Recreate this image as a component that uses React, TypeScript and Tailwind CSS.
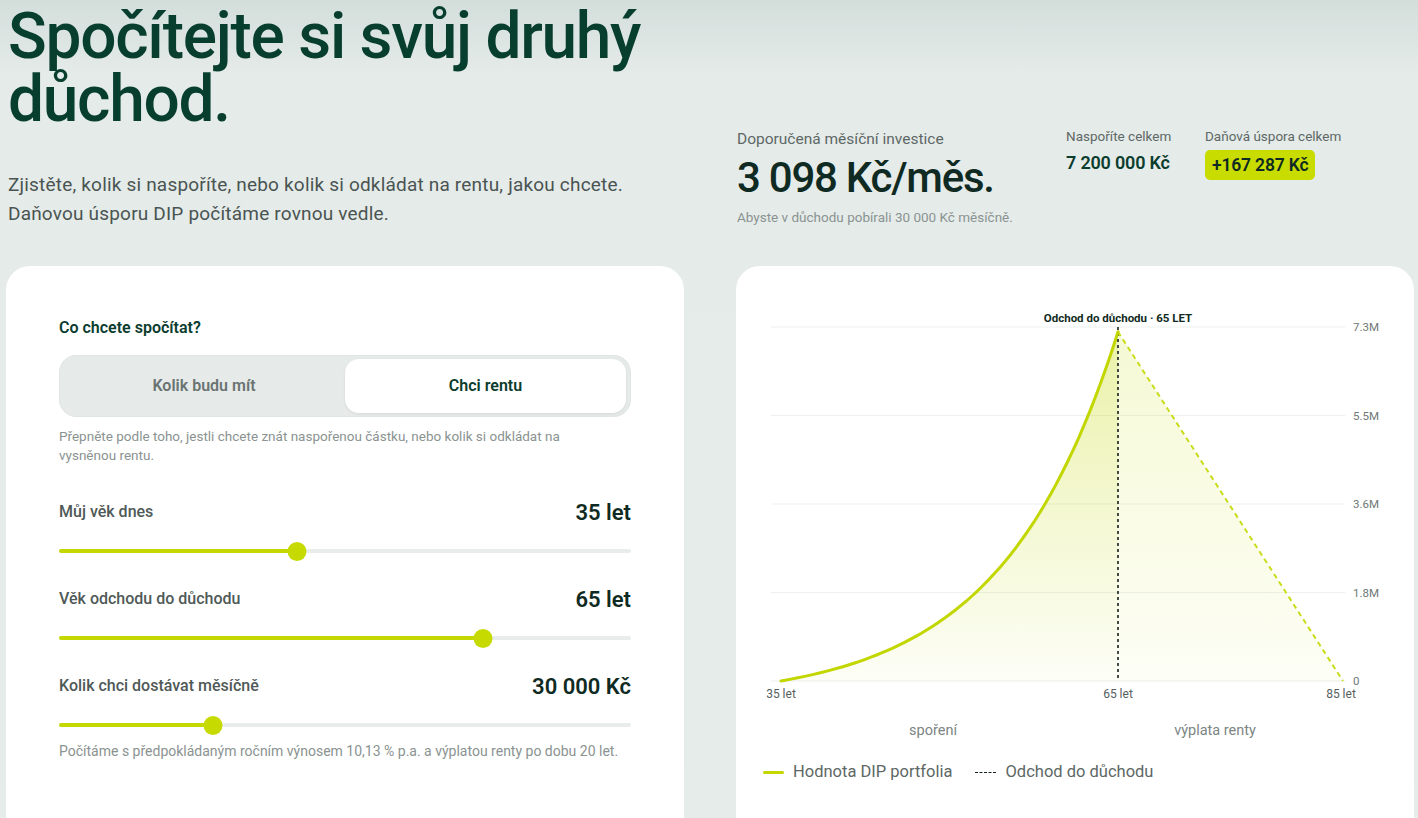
import React from "react";

const FONT = "font-['Roboto','Liberation_Sans',sans-serif]";

const sliders = [
  { label: "Můj věk dnes", value: "35 let", pct: 41.6 },
  { label: "Věk odchodu do důchodu", value: "65 let", pct: 74.1 },
  { label: "Kolik chci dostávat měsíčně", value: "30 000 Kč", pct: 26.9 },
];

// chart geometry (svg coords)
const X0 = 25;
const X65 = 362;
const X85 = 587;
const Y0 = 375;
const YTOP = 21;
const MAX = 7.3;

function yOf(v: number) {
  return Y0 - (v / MAX) * (Y0 - YTOP);
}

function buildCurve() {
  const g = 1.1013;
  const full = Math.pow(g, 30) - 1;
  const pts: string[] = [];
  for (let i = 0; i <= 60; i++) {
    const n = i / 2;
    const v = ((Math.pow(g, n) - 1) / full) * 7.2;
    const x = X0 + (n / 30) * (X65 - X0);
    pts.push(`${x.toFixed(1)},${yOf(v).toFixed(1)}`);
  }
  return pts;
}

const curvePts = buildCurve();
const curvePath = "M" + curvePts.join(" L");
const areaPath = curvePath + ` L${X65},${Y0} L${X0},${Y0} Z`;
const peakY = yOf(7.2);

const yTicks = [
  { label: "7.3M", v: 7.3 },
  { label: "5.5M", v: 5.475 },
  { label: "3.6M", v: 3.65 },
  { label: "1.8M", v: 1.825 },
  { label: "0", v: 0 },
];

function Chart() {
  return (
    <svg width="640" height="440" viewBox="0 0 640 440" className="block">
      <defs>
        <linearGradient id="saveFill" x1="0" y1="0" x2="0" y2="1">
          <stop offset="0%" stopColor="#c9dc1e" stopOpacity="0.38" />
          <stop offset="100%" stopColor="#c9dc1e" stopOpacity="0.04" />
        </linearGradient>
        <linearGradient id="payFill" x1="0" y1="0" x2="0" y2="1">
          <stop offset="0%" stopColor="#d4e43c" stopOpacity="0.22" />
          <stop offset="100%" stopColor="#d4e43c" stopOpacity="0.05" />
        </linearGradient>
      </defs>

      {yTicks.map((t) => (
        <g key={t.label}>
          <line x1="15" x2="589" y1={yOf(t.v)} y2={yOf(t.v)} stroke="#edf0ef" strokeWidth="1.2" />
          <text x="597" y={yOf(t.v) + 4} fontSize="11.5" fill="#6e7876" fontFamily="Roboto, sans-serif">
            {t.label}
          </text>
        </g>
      ))}

      <path d={areaPath} fill="url(#saveFill)" />
      <path d={`M${X65},${peakY} L${X85},${Y0} L${X65},${Y0} Z`} fill="url(#payFill)" />

      <line x1={X65} x2={X65} y1={YTOP} y2={Y0} stroke="#14201c" strokeWidth="1.6" strokeDasharray="3 3" />
      <path d={`M${X65},${peakY} L${X85},${Y0}`} stroke="#c8dc1a" strokeWidth="2" strokeDasharray="5 4" fill="none" />
      <path d={curvePath} stroke="#c2d600" strokeWidth="3" fill="none" strokeLinejoin="round" strokeLinecap="round" />

      <text x={X65} y="16" textAnchor="middle" fontSize="11.5" fontWeight="700" fill="#102a22" fontFamily="Roboto, sans-serif">
        Odchod do důchodu · 65 LET
      </text>

      {[
        { x: X0, t: "35 let" },
        { x: X65, t: "65 let" },
        { x: X85 - 2, t: "85 let" },
      ].map((l) => (
        <text key={l.t} x={l.x} y="392" textAnchor="middle" fontSize="12" fill="#56605e" fontFamily="Roboto, sans-serif">
          {l.t}
        </text>
      ))}

      <text x="177" y="429" textAnchor="middle" fontSize="14.5" fill="#7c8684" fontFamily="Roboto, sans-serif">
        spoření
      </text>
      <text x="459" y="429" textAnchor="middle" fontSize="14.5" fill="#7c8684" fontFamily="Roboto, sans-serif">
        výplata renty
      </text>
    </svg>
  );
}

function Slider({ label, value, pct }: { label: string; value: string; pct: number }) {
  return (
    <div className="flex flex-col">
      <div className="flex items-center justify-between h-[24px]">
        <span className="text-[16px] font-medium text-[#4f5957]">{label}</span>
        <span className="text-[22px] font-semibold text-[#0f2a22]">{value}</span>
      </div>
      <div className="relative mt-[18px] h-[18px] flex items-center">
        <div className="h-[4px] w-full rounded-full bg-[#e8ecea]">
          <div className="h-[4px] rounded-full bg-[#c4d800]" style={{ width: `${pct}%` }} />
        </div>
        <div
          className="absolute top-0 h-[19px] w-[19px] -translate-x-1/2 rounded-full bg-[#c6da00]"
          style={{ left: `${pct}%` }}
        />
      </div>
    </div>
  );
}

export default function App() {
  return (
    <div
      className={`${FONT} h-[818px] w-full overflow-hidden bg-[linear-gradient(180deg,#d3dedb_0px,#e5ebe9_75px,#e6ecea_100%)] pl-[6px]`}
    >
      <div className="grid h-[266px] grid-cols-[678px_678px] gap-[52px]">
        {/* Left intro */}
        <div className="flex flex-col">
          <h1 className="pl-[2px] pt-[5px] text-[64px] font-medium leading-[63px] tracking-[-0.02em] text-[#073e2e]">
            Spočítejte si svůj druhý
            <br />
            důchod.
          </h1>
          <p className="mt-[39px] pl-[2px] text-[19px] leading-[29px] tracking-[0.01em] text-[#4a5452]">
            Zjistěte, kolik si naspoříte, nebo kolik si odkládat na rentu, jakou chcete.
            <br />
            Daňovou úsporu DIP počítáme rovnou vedle.
          </p>
        </div>

        {/* Right stats */}
        <div className="flex items-start pt-[127px] pl-[1px]">
          <div className="flex w-[329px] flex-col">
            <span className="mt-[2px] text-[15.5px] leading-[20px] text-[#5d6866]">
              Doporučená měsíční investice
            </span>
            <span className="mt-[5px] text-[42px] font-medium leading-[48px] tracking-[-0.03em] text-[#0f2a22]">
              3 098 Kč/měs.
            </span>
            <span className="mt-[6px] text-[13.5px] leading-[18px] text-[#8a9391]">
              Abyste v důchodu pobírali 30 000 Kč měsíčně.
            </span>
          </div>
          <div className="flex w-[139px] flex-col">
            <span className="text-[13.5px] leading-[18px] text-[#5d6866]">Naspoříte celkem</span>
            <span className="mt-[6px] text-[18px] font-semibold leading-[24px] tracking-[-0.01em] text-[#0b3d2e]">
              7 200 000 Kč
            </span>
          </div>
          <div className="flex flex-col items-start">
            <span className="text-[13.5px] leading-[18px] text-[#5d6866]">Daňová úspora celkem</span>
            <span className="mt-[5px] flex h-[30px] items-center rounded-[5px] bg-[#c8dc00] px-[7px] text-[17.5px] font-semibold tracking-[-0.01em] text-[#0f2a22]">
              +167 287 Kč
            </span>
          </div>
        </div>
      </div>

      <div className="grid grid-cols-[678px_678px] gap-[52px]">
        {/* Calculator card */}
        <div className="h-[580px] rounded-[24px] bg-white px-[53px] pt-[52px]">
          <div className="text-[16px] font-semibold leading-[20px] text-[#0b3d2e]">Co chcete spočítat?</div>
          <div className="mt-[17px] flex h-[62px] rounded-[18px] bg-[#e6ebea] p-[4px] pr-[5px] shadow-[inset_0_0_0_1px_#e0e6e4]">
            <div className="flex flex-1 items-center justify-center text-[16px] font-semibold text-[#6b7472]">
              Kolik budu mít
            </div>
            <div className="flex w-[281px] items-center justify-center rounded-[14px] bg-white text-[16px] font-semibold text-[#0b3d2e] shadow-[0_1px_3px_rgba(0,0,0,0.08)]">
              Chci rentu
            </div>
          </div>
          <p className="mt-[10px] w-[530px] text-[13.5px] leading-[19px] text-[#8a9391]">
            Přepněte podle toho, jestli chcete znát naspořenou částku, nebo kolik si odkládat na vysněnou rentu.
          </p>

          <div className="mt-[35px] flex flex-col gap-[27px]">
            {sliders.map((s) => (
              <Slider key={s.label} {...s} />
            ))}
          </div>
          <p className="mt-[8px] text-[14px] leading-[19px] text-[#8a9391]">
            Počítáme s předpokládaným ročním výnosem 10,13 % p.a. a výplatou renty po dobu 20 let.
          </p>
        </div>

        {/* Chart card */}
        <div className="h-[580px] rounded-[24px] bg-white pl-[20px] pt-[40px]">
          <Chart />
          <div className="ml-[7px] mt-[14px] flex items-center text-[16.5px] text-[#5d6765]">
            <span className="h-[3px] w-[21px] rounded-full bg-[#c4d800]" />
            <span className="ml-[9px]">Hodnota DIP portfolia</span>
            <span className="ml-[22px] w-[21px] border-t border-dashed border-[#14201c]" />
            <span className="ml-[10px]">Odchod do důchodu</span>
          </div>
        </div>
      </div>
    </div>
  );
}
